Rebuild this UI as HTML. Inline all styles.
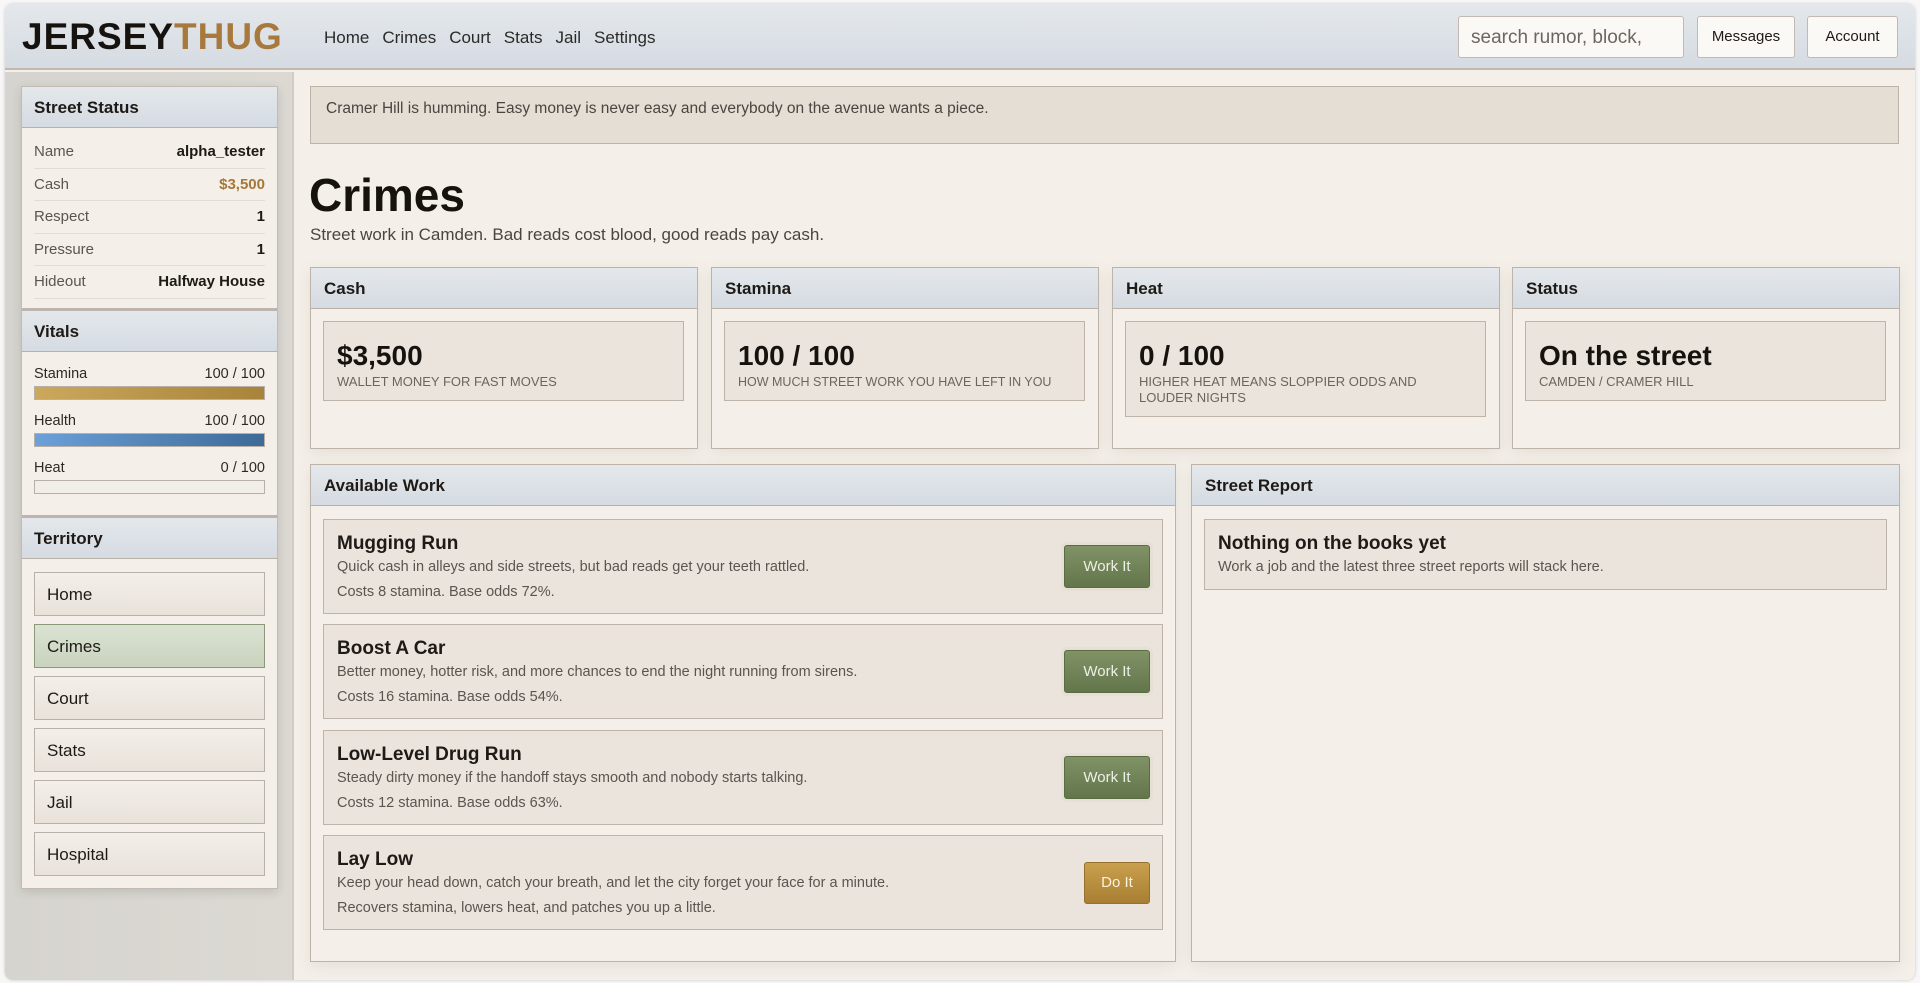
<!DOCTYPE html>
<html><head><meta charset="utf-8"><style>
*{box-sizing:border-box;margin:0;padding:0}
body{width:1920px;height:983px;background:#f7f7f7;font-family:"Liberation Sans",sans-serif;color:#1e1a16;overflow:hidden;position:relative}
.frame{position:absolute;left:5px;top:4px;width:1910px;height:976px;border-radius:8px;overflow:hidden;background:#f4f0e9;box-shadow:0 0 3px rgba(0,0,0,.2)}
.hdr{position:absolute;left:0;top:0;width:100%;height:66px;background:linear-gradient(#e4e8ec,#d5dbe2);border-bottom:2px solid #c3b8ae}
.logo{position:absolute;left:17px;top:12px;font-size:37px;font-weight:bold;letter-spacing:1px;color:#16130f}
.logo span{color:#a8793c}
.nav{position:absolute;left:319px;top:24px;font-size:17px;color:#2b2a28}
.nav span{margin-right:13px}
.search{position:absolute;left:1453px;top:12px;width:226px;height:42px;background:#fbf9f5;border:1px solid #c2bab2;border-radius:3px;font-size:19px;color:#6b6660;padding:10px 12px}
.btn{position:absolute;top:12px;height:42px;background:#fbf9f5;border:1px solid #c2bab2;border-radius:3px;font-size:15px;text-align:center;line-height:40px;color:#1e1a16}
.side{position:absolute;left:0;top:68px;width:289px;height:910px;background:linear-gradient(90deg,#d6d4cf,#dcd9d3);border-right:2px solid #d4ccc2}
.spanel{position:absolute;left:16px;top:14px;width:257px;height:803px;background:#f4f0e9;border:1px solid #c3bbb2;box-shadow:0 3px 10px rgba(0,0,0,.12)}
.sh{height:41px;background:linear-gradient(#e4e8ec,#d5dbe2);border-bottom:1px solid #b9b0a8;font-size:17px;font-weight:bold;padding:11px 12px}
.row{display:flex;justify-content:space-between;margin:0 12px;height:32.5px;line-height:32px;border-bottom:1px solid #e2dcd4;font-size:15px}
.row .k{color:#5a554f}.row .v{font-weight:bold}
.vl{display:flex;justify-content:space-between;margin:0 12px;font-size:14.5px;color:#2d2925}
.bar{margin:4px 12px 0;height:14px;border:1px solid #b8afa6}
.tb{display:block;margin:0 12px 8px;height:44px;border:1px solid #b9b0a7;background:linear-gradient(#f3efe9,#e8e2da);font-size:17px;padding:12px 12px}
.main{position:absolute;left:305px;top:82px}
.card{position:absolute;background:#f4f0e9;border:1px solid #bdb3a9;box-shadow:0 4px 14px rgba(120,100,80,.12)}
.ch{height:41px;background:linear-gradient(#e4e8ec,#d5dbe2);border-bottom:1px solid #b9b0a8;font-size:17px;font-weight:bold;padding:11px 13px}
.inner{position:absolute;background:#ebe4dc;border:1px solid #bdb3a9}
.val{font-size:28px;font-weight:bold;color:#16130f}
.sub{font-size:13px;color:#6b655e;text-transform:uppercase;margin-top:2px;line-height:16px}
.job{position:absolute;left:12px;width:840px;height:95px;background:#ebe4dc;border:1px solid #bdb3a9;padding:13px 13px}
.job h3{font-size:19px;font-weight:600;color:#1e1a16;margin-bottom:3px}
.job p{font-size:14.5px;color:#5a554f;line-height:19px}
.job p.c{margin-top:6px}
.wb{position:absolute;right:12px;top:25px;width:86px;height:43px;background:linear-gradient(#809266,#63764b);border:1px solid #5b6c44;border-radius:3px;color:#eef0e6;font-size:15px;text-align:center;line-height:41px;box-shadow:0 0 0 3px #e6dfd4}
.db{position:absolute;right:12px;top:26px;width:66px;height:42px;background:linear-gradient(#c9a04d,#a87e33);border:1px solid #967030;border-radius:3px;color:#fbf1dc;font-size:15px;text-align:center;line-height:40px}
</style></head><body>
<div class="frame">
<div class="hdr">
<div class="logo">JERSEY<span>THUG</span></div>
<div class="nav"><span>Home</span><span>Crimes</span><span>Court</span><span>Stats</span><span>Jail</span><span>Settings</span></div>
<div class="search">search rumor, block,</div>
<div class="btn" style="left:1692px;width:98px">Messages</div>
<div class="btn" style="left:1802px;width:91px">Account</div>
</div>
<div class="side">
<div class="spanel">
<div class="sh">Street Status</div>
<div style="height:8px"></div>
<div class="row"><span class="k">Name</span><span class="v">alpha_tester</span></div>
<div class="row"><span class="k">Cash</span><span class="v" style="color:#a5783a">$3,500</span></div>
<div class="row"><span class="k">Respect</span><span class="v">1</span></div>
<div class="row"><span class="k">Pressure</span><span class="v">1</span></div>
<div class="row"><span class="k">Hideout</span><span class="v">Halfway House</span></div>
<div style="height:12px;border-bottom:3px solid #bdb5ad"></div>
<div class="sh">Vitals</div>
<div style="height:14px"></div>
<div class="vl"><span>Stamina</span><span>100 / 100</span></div>
<div class="bar" style="background:linear-gradient(90deg,#cba85c,#a8833a)"></div>
<div style="height:13px"></div>
<div class="vl"><span>Health</span><span>100 / 100</span></div>
<div class="bar" style="background:linear-gradient(90deg,#6ca0d8,#3e6a98)"></div>
<div style="height:13px"></div>
<div class="vl"><span>Heat</span><span>0 / 100</span></div>
<div class="bar" style="background:#f1ede7"></div>
<div style="height:24px;border-bottom:3px solid #bdb5ad"></div>
<div class="sh">Territory</div>
<div style="height:13px"></div>
<div class="tb">Home</div>
<div class="tb" style="background:linear-gradient(#dbe2d3,#c9d3bd);border-color:#8a9a78">Crimes</div>
<div class="tb">Court</div>
<div class="tb">Stats</div>
<div class="tb">Jail</div>
<div class="tb">Hospital</div>
</div>
</div>
<div class="main">
<div style="position:absolute;left:0;top:0;width:1589px;height:58px;background:#e5ded5;border:1px solid #bdb3a9;padding:13px 15px;font-size:15.5px;color:#4a4540">Cramer Hill is humming. Easy money is never easy and everybody on the avenue wants a piece.</div>
<div style="position:absolute;left:-1px;top:82px;font-size:46px;font-weight:bold;color:#16130f;white-space:nowrap">Crimes</div>
<div style="position:absolute;left:0;top:139px;font-size:17px;color:#4a4540;white-space:nowrap">Street work in Camden. Bad reads cost blood, good reads pay cash.</div>

<div class="card" style="left:0;top:181px;width:388px;height:182px"><div class="ch">Cash</div>
<div class="inner" style="left:12px;top:53px;width:361px;height:80px;padding:18px 13px"><div class="val">$3,500</div><div class="sub">Wallet money for fast moves</div></div></div>
<div class="card" style="left:401px;top:181px;width:388px;height:182px"><div class="ch">Stamina</div>
<div class="inner" style="left:12px;top:53px;width:361px;height:80px;padding:18px 13px"><div class="val">100 / 100</div><div class="sub" style="white-space:nowrap;font-size:12.5px">How much street work you have left in you</div></div></div>
<div class="card" style="left:802px;top:181px;width:388px;height:182px"><div class="ch">Heat</div>
<div class="inner" style="left:12px;top:53px;width:361px;height:96px;padding:18px 13px"><div class="val">0 / 100</div><div class="sub">Higher heat means sloppier odds and louder nights</div></div></div>
<div class="card" style="left:1202px;top:181px;width:388px;height:182px"><div class="ch">Status</div>
<div class="inner" style="left:12px;top:53px;width:361px;height:80px;padding:18px 13px"><div class="val">On the street</div><div class="sub">Camden / Cramer Hill</div></div></div>

<div class="card" style="left:0;top:378px;width:866px;height:498px"><div class="ch">Available Work</div>
<div class="job" style="top:54px"><h3>Mugging Run</h3><p>Quick cash in alleys and side streets, but bad reads get your teeth rattled.</p><p class="c">Costs 8 stamina. Base odds 72%.</p><div class="wb">Work It</div></div>
<div class="job" style="top:159px"><h3>Boost A Car</h3><p>Better money, hotter risk, and more chances to end the night running from sirens.</p><p class="c">Costs 16 stamina. Base odds 54%.</p><div class="wb">Work It</div></div>
<div class="job" style="top:265px"><h3>Low-Level Drug Run</h3><p>Steady dirty money if the handoff stays smooth and nobody starts talking.</p><p class="c">Costs 12 stamina. Base odds 63%.</p><div class="wb">Work It</div></div>
<div class="job" style="top:370px"><h3>Lay Low</h3><p>Keep your head down, catch your breath, and let the city forget your face for a minute.</p><p class="c">Recovers stamina, lowers heat, and patches you up a little.</p><div class="db">Do It</div></div>
</div>
<div class="card" style="left:881px;top:378px;width:709px;height:498px"><div class="ch">Street Report</div>
<div class="job" style="top:54px;width:683px;height:71px"><h3>Nothing on the books yet</h3><p>Work a job and the latest three street reports will stack here.</p></div>
</div>
</div>
</div>
</body></html>
